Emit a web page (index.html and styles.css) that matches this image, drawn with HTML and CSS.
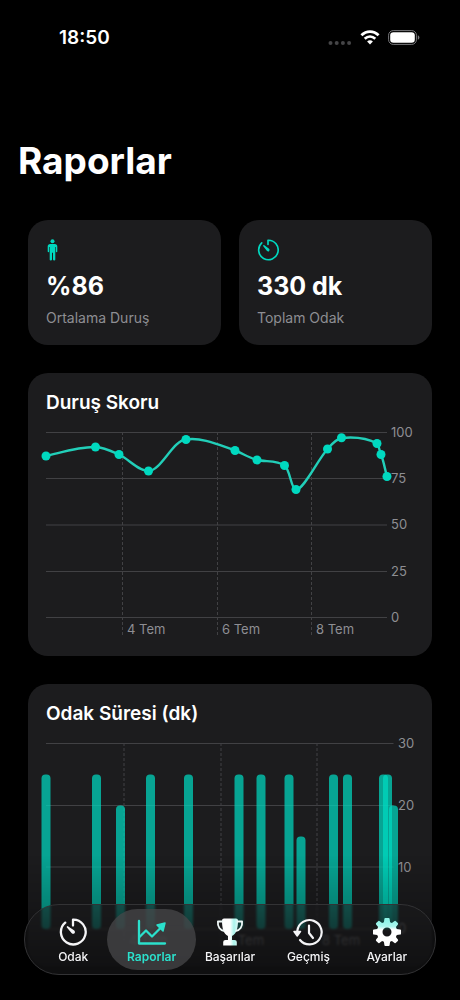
FILE: index.html
```html
<!DOCTYPE html>
<html lang="tr">
<head>
<meta charset="utf-8">
<meta name="viewport" content="width=device-width, initial-scale=1">
<title>Raporlar</title>
<link rel="stylesheet" href="styles.css">
</head>
<body>
<header class="status">
  <time class="clock">18:50</time>
  <div class="status-icons">
    <svg class="dots" width="24" height="4" viewBox="0 0 24 4"><circle cx="2.5" cy="2" r="2"/><circle cx="8.7" cy="2" r="2"/><circle cx="14.9" cy="2" r="2"/><circle cx="21.1" cy="2" r="2"/></svg>
    <svg width="20" height="15" viewBox="0 0 20 15" fill="none" stroke="#fff" stroke-width="2.7"><path d="M1.4 5.3C6.4.3 13.6.3 18.6 5.3"/><path d="M4.7 8.8C7.8 5.9 12.2 5.9 15.3 8.8"/><path d="M10 14.4L7.1 11.4C8.9 9.9 11.1 9.9 12.9 11.4Z" fill="#fff" stroke="none"/></svg>
    <svg width="32" height="15" viewBox="0 0 32 15"><rect x=".6" y=".6" width="27.8" height="13.8" rx="4.6" fill="none" stroke="#77777a" stroke-width="1"/><rect x="2.2" y="2.2" width="24.6" height="10.6" rx="3.2" fill="#fff"/><path d="M29.8 5.2Q31.4 5.8 31.4 7.5T29.8 9.8Z" fill="#77777a"/></svg>
  </div>
</header>

<main class="page">
  <h1 class="title">Raporlar</h1>
  <section class="stats">
    <article class="card stat">
      <svg class="stat-icon" width="13" height="22" viewBox="0 0 13 22" fill="currentColor"><circle cx="6.500" cy="2.300" r="2"/><path d="M4.300 5H8.700Q11.300 5 11.300 7.500V12.500Q11.300 13.300 10.600 13.300T9.900 12.500V8H9.300V20.600Q9.300 21.500 8.200 21.500T7 20.600V13.800H6V20.600Q6 21.500 4.800 21.500T3.700 20.600V8H3.100V12.500Q3.100 13.300 2.400 13.300T1.700 12.500V7.500Q1.700 5 4.300 5Z"/></svg>
      <strong class="value">%86</strong>
      <span class="label">Ortalama Duruş</span>
    </article>
    <article class="card stat">
      <svg class="stat-icon" width="22" height="22" viewBox="0 0 28 28"><path d="M6 5A12.400 12.400 0 1 0 14 1.600V7" fill="none" stroke="currentColor" stroke-width="2.100" stroke-linecap="round" stroke-linejoin="round"/><path d="M8 8Q8.600 7.400 9.400 8L15.300 12.400Q16.700 13.800 15.500 15.200T12.500 15L8 9.200Q7.500 8.600 8 8Z" fill="currentColor"/></svg>
      <strong class="value">330 dk</strong>
      <span class="label">Toplam Odak</span>
    </article>
  </section>

  <section class="card chart-card">
    <h2 class="chart-title">Duruş Skoru</h2>
    <svg class="chart" viewBox="0 0 368 210" role="img" aria-label="Duruş Skoru">
      <g class="grid"><path d="M0 5.5H341M0 51.5H341M0 98H341M0 144.5H341M0 190.5H341"/><path class="dash" d="M76.5 5V209M171.5 5V209M265.5 5V209"/></g>
      <g class="axis"><text x="345" y="10">100</text><text x="345" y="56">75</text><text x="345" y="102">50</text><text x="345" y="149">25</text><text x="345" y="195">0</text><text x="81" y="207">4 Tem</text><text x="176" y="207">6 Tem</text><text x="270" y="207">8 Tem</text></g>
      <path class="line" d="M0 29C17 25 34 19.500 49.500 20C58 20.500 65 24 73 27.500C83 32 92 44 102.500 44C115 44 127 13 140 12.500C156 10 173 18 189 23.500C196 26 203 31 211 33C220 35 231 33 238.500 38.500C244 42 245 62 250 63C258 62 271 34 281.500 22C286 17 290 12 295.500 11C306 10 321 11 331 16.500C333 18 333 23 335 27.500C338 35 339 43 341 49.500"/>
      <g class="points"><circle cx="0" cy="29" r="4.500"/><circle cx="49.500" cy="20" r="4.500"/><circle cx="73" cy="27.500" r="4.500"/><circle cx="102.500" cy="44" r="4.500"/><circle cx="140" cy="12.500" r="4.500"/><circle cx="189" cy="23.500" r="4.500"/><circle cx="211" cy="33" r="4.500"/><circle cx="238.500" cy="38.500" r="4.500"/><circle cx="250" cy="62.500" r="4.500"/><circle cx="281.500" cy="22" r="4.500"/><circle cx="295.500" cy="10.700" r="4.500"/><circle cx="331" cy="16.500" r="4.500"/><circle cx="335" cy="27.500" r="4.500"/><circle cx="341" cy="49.500" r="4.500"/></g>
    </svg>
  </section>

  <section class="card chart-card">
    <h2 class="chart-title">Odak Süresi (dk)</h2>
    <svg class="chart" viewBox="0 0 368 210" role="img" aria-label="Odak Süresi (dk)">
      <g class="grid"><path d="M0 5.500H347.500M0 67.500H347.500M0 129H347.500M0 191H347.500"/><path class="dash" d="M78 5V209M175 5V209M271 5V209"/></g>
      <g class="axis"><text x="352" y="10">30</text><text x="352" y="72">20</text><text x="352" y="134">10</text><text x="352" y="195">0</text><text x="83" y="207">4 Tem</text><text x="180" y="207">6 Tem</text><text x="276" y="207">8 Tem</text></g>
      <g class="bars"><rect x="-4.500" y="36.500" width="9" height="154.500" rx="4"/><rect x="46" y="36.500" width="9" height="154.500" rx="4"/><rect x="70" y="67.500" width="9" height="123.500" rx="4"/><rect x="100" y="36.500" width="9" height="154.500" rx="4"/><rect x="138" y="36.500" width="9" height="154.500" rx="4"/><rect x="188.500" y="36.500" width="9" height="154.500" rx="4"/><rect x="210.500" y="36.500" width="9" height="154.500" rx="4"/><rect x="238.500" y="36.500" width="9" height="154.500" rx="4"/><rect x="250.500" y="98.500" width="9" height="92.500" rx="4"/><rect x="283" y="36.500" width="9" height="154.500" rx="4"/><rect x="297" y="36.500" width="9" height="154.500" rx="4"/><rect x="333" y="36.500" width="9" height="154.500" rx="4"/><rect x="337" y="36.500" width="9" height="154.500" rx="4"/><rect x="343" y="67.500" width="9" height="123.500" rx="4"/></g>
    </svg>
  </section>
</main>

<div class="fade"></div>
<nav class="tabs">
  <button class="tab" type="button">
    <svg width="28" height="28" viewBox="0 0 28 28"><path d="M6.200 4.600A12.400 12.400 0 1 0 14 1.600V7.500" fill="none" stroke="currentColor" stroke-width="2.300" stroke-linecap="round" stroke-linejoin="round"/><path d="M7.900 8.400Q8.500 7.800 9.300 8.400L15.300 12.400Q16.700 13.800 15.500 15.200T12.500 15L7.900 9.600Q7.400 9 7.900 8.400Z" fill="currentColor"/></svg>
    <span>Odak</span>
  </button>
  <button class="tab active" type="button" aria-current="page">
    <svg width="30" height="28" viewBox="0 0 30 28" fill="none" stroke="currentColor" stroke-width="2.300" stroke-linecap="round" stroke-linejoin="round"><path d="M2 3V25.500H28"/><path d="M2.500 19L9 12.500L15 18.500L24 9.500"/><path d="M28 5L26 13L20 7Z" fill="currentColor" stroke-width="1.500"/></svg>
    <span>Raporlar</span>
  </button>
  <button class="tab" type="button">
    <svg width="28" height="28" viewBox="0 0 28 28"><defs><linearGradient id="cupTint"><stop offset=".5" stop-color="#fff"/><stop offset=".75" stop-color="#a9f4eb"/><stop offset=".95" stop-color="#d5f8f4"/></linearGradient></defs><path d="M6 2.500Q6 .5 8 .5H20Q22 .5 22 2.500C22 10 20.500 16 16 18V22H18.500Q20.800 22 20.800 24V27.500H7.200V24Q7.200 22 9.500 22H12V18C7.500 16 6 10 6 2.500Z" fill="url(#cupTint)"/><path d="M7 3.500H1.900C1.400 8.500 4 12.500 8.500 13M21 3.500H26.100C26.600 8.500 24 12.500 19.500 13" fill="none" stroke="#eef7f6" stroke-width="1.800" stroke-linejoin="round"/></svg>
    <span>Başarılar</span>
  </button>
  <button class="tab" type="button">
    <svg width="30" height="28" viewBox="0 0 30 28" fill="none" stroke="currentColor" stroke-width="2.200" stroke-linecap="round" stroke-linejoin="round"><path d="M4.300 13A12.200 12.200 0 1 1 7 22"/><path d="M1 13.500H7.500L4.200 18Z" fill="currentColor" stroke-width="1.500"/><path d="M16 7.500V15L20 20"/></svg>
    <span>Geçmiş</span>
  </button>
  <button class="tab" type="button">
    <svg width="28" height="28" viewBox="0 0 28 28"><defs><linearGradient id="gearTint" x2="0" y2="1"><stop offset=".1" stop-color="#8ff5e8"/><stop offset=".3" stop-color="#a9f7ee"/><stop offset=".42" stop-color="#fff"/></linearGradient></defs><path fill="url(#gearTint)" fill-rule="evenodd" d="M11.400.8Q11.500 0 12.300 0H15.700Q16.500 0 16.600.8L17.100 4.200L18.900 5.100L21.600 3.100Q22.300 2.600 22.900 3.200L24.800 5.100Q25.400 5.700 24.900 6.400L22.900 9.100L23.800 10.900L27.200 11.400Q28 11.500 28 12.300V15.700Q28 16.500 27.200 16.600L23.800 17.100L22.900 18.900L24.900 21.600Q25.400 22.300 24.800 22.900L22.900 24.800Q22.300 25.400 21.600 24.900L18.900 22.900L17.100 23.800L16.600 27.200Q16.500 28 15.700 28H12.300Q11.500 28 11.400 27.200L10.900 23.800L9.100 22.900L6.400 24.900Q5.700 25.400 5.100 24.800L3.200 22.900Q2.600 22.300 3.100 21.600L5.100 18.900L4.200 17.100L.8 16.600Q0 16.500 0 15.700V12.300Q0 11.500.8 11.400L4.200 10.900L5.100 9.100L3.100 6.400Q2.600 5.700 3.200 5.100L5.100 3.200Q5.700 2.600 6.400 3.100L9.100 5.100L10.900 4.200ZM14 9.500A4.500 4.500 0 1 0 14 18.500A4.500 4.500 0 1 0 14 9.500Z"/></svg>
    <span>Ayarlar</span>
  </button>
</nav>
</body>
</html>
```
FILE: styles.css
```css
* { box-sizing: border-box; }
body {
  margin: 0;
  height: 100vh;
  overflow: hidden;
  background: #000;
  color: #fff;
  font-family: Inter, "Liberation Sans", sans-serif;
}
.status {
  display: flex;
  justify-content: space-between;
  align-items: center;
  height: 74px;
  padding: 0 40px 0 59px;
}
.clock { padding-top: 2px; font-size: 19px; font-weight: 600; line-height: 24px; }
.status-icons { display: flex; align-items: center; gap: 8px; }
.dots { fill: #454547; align-self: flex-end; }
.page { padding: 63px 28px 0; }
.title {
  margin: 0 0 35px -10px;
  font-size: 37px;
  line-height: 48px;
  font-weight: 700;
}
.stats { display: grid; grid-template-columns: 1fr 1fr; gap: 18px; }
.card { background: #1c1c1e; border-radius: 20px; margin-bottom: 28px; }
.stat {
  display: flex;
  flex-direction: column;
  align-items: flex-start;
  padding: 19px 18px 17px;
}
.stat-icon { color: #00d9c0; }
.value { margin-top: 8px; font-size: 25px; line-height: 34px; font-weight: 700; }
.label { margin-top: 5px; font-size: 14px; line-height: 20px; color: #8e8e93; }
.chart-card { padding: 18px 18px 19px; }
.chart-title { margin: 0 0 12px; font-size: 19px; line-height: 24px; font-weight: 600; }
.chart { display: block; width: 100%; overflow: visible; }
.grid { fill: none; stroke: #414144; stroke-width: 1; }
.dash { stroke-dasharray: 3 2; }
.axis { fill: #8e8e93; font-size: 13px; }
.line { fill: none; stroke: #22cfb9; stroke-width: 2.4px; }
.points { fill: #00d9c0; }
.bars { fill: #00d9c0; fill-opacity: .72; }
.fade {
  position: fixed;
  inset: auto 0 0;
  height: 145px;
  background: linear-gradient(transparent, rgba(0,0,0,.2) 36%, rgba(0,0,0,.45) 55%, rgba(0,0,0,.9) 84%, #000 90%);
}
.tabs {
  position: fixed;
  inset: auto 24px 25px;
  display: flex;
  padding: 4px 9px;
  border: 1px solid #333335;
  border-radius: 35px;
  background: rgba(28,28,30,.55);
  backdrop-filter: blur(1px);
}
.tab {
  flex: 1 1 0;
  display: flex;
  flex-direction: column;
  align-items: center;
  gap: 3px;
  min-width: 0;
  padding: 9px 0 5px;
  border: 0;
  border-radius: 31px;
  background: none;
  color: #f5f5f7;
  font-family: inherit;
  font-size: 12px;
  line-height: 16px;
  font-weight: 500;
}
.active {
  margin: 0 -5px;
  padding-inline: 5px;
  background: rgba(72,72,74,.75);
  color: #2be0cc;
  font-weight: 600;
}
```
